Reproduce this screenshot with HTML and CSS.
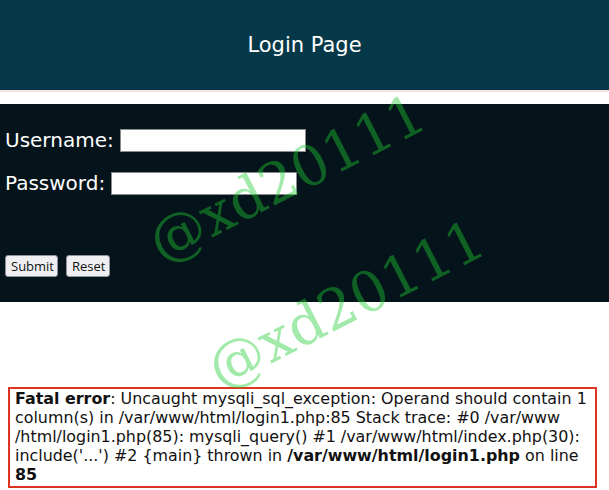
FILE: index.html
```html
<!DOCTYPE html>
<html lang="en">
<head>
<meta charset="utf-8">
<title>Login Page</title>
<link rel="stylesheet" href="styles.css">
</head>
<body>
<header class="top">
  <h1 class="title">Login Page</h1>
</header>
<div class="rule"></div>
<section class="login">
  <form class="form">
    <div class="row">
      <label class="label" for="u">Username:</label>
      <input class="field field-user" id="u" type="text">
    </div>
    <div class="row">
      <label class="label" for="p">Password:</label>
      <input class="field field-pass" id="p" type="password">
    </div>
    <div class="buttons">
      <button class="btn btn-submit" type="button">Submit</button>
      <button class="btn btn-reset" type="button">Reset</button>
    </div>
  </form>
</section>
<div class="error"><b>Fatal error</b>: Uncaught mysqli_sql_exception: Operand should contain 1 column(s) in /var/www/html/login1.php:85 Stack trace: #0 /var/www<wbr>/html/login1.php(85): mysqli_query() #1 /var/www/html/index.php(30): include('...') #2 {main} thrown in <b>/var/www/html/login1.php</b> on line <b>85</b></div>
<div class="mark mark-one">@xd20111</div>
<div class="mark mark-two">@xd20111</div>
</body>
</html>
```
FILE: styles.css
```css
html, body {
  margin: 0;
  padding: 0;
}
body {
  background: #ffffff;
  font-family: "DejaVu Sans", sans-serif;
  position: relative;
  height: 490px;
  overflow: hidden;
}
.top {
  height: 90px;
  background: #05394a;
  display: flex;
  align-items: center;
  justify-content: center;
}
.title {
  margin: 0;
  font-weight: normal;
  font-size: 21px;
  color: #ffffff;
}
.rule {
  height: 2px;
  background: #fbe3e3;
  margin-bottom: 12px;
}
.login {
  background: #05131a;
  height: 198px;
  box-sizing: border-box;
  padding: 25px 5px 0;
}
.form {
  display: flex;
  flex-direction: column;
  gap: 20px;
}
.row {
  display: flex;
  align-items: center;
  gap: 6px;
  height: 23px;
}
.label {
  font-size: 20px;
  line-height: 23px;
  color: #ffffff;
}
.field {
  box-sizing: border-box;
  width: 186px;
  height: 23px;
  margin: 0;
  border: 1px solid #8a8a8a;
  background: #ffffff;
  padding: 0 3px;
}
.buttons {
  display: flex;
  gap: 8px;
  margin-top: 40px;
}
.btn {
  box-sizing: border-box;
  height: 22px;
  margin: 0;
  padding: 0 5px;
  font-family: "Open Sans", "DejaVu Sans", sans-serif;
  font-size: 13px;
  color: #111;
  background: #efeff2;
  border: 1px solid #8f8f9d;
  border-radius: 3px;
}
.btn-submit { width: 53px; }
.btn-reset { width: 44px; }
.error {
  margin: 85px 12px 0 8px;
  border: 2px solid #dc3522;
  padding: 0 2px 2px 5px;
  font-size: 15.9px;
  line-height: 19px;
  color: #111;
}
.mark {
  position: absolute;
  font-family: "DejaVu Serif", serif;
  font-size: 56px;
  line-height: 1;
  color: rgba(30, 205, 50, 0.42);
  white-space: nowrap;
  pointer-events: none;
  transform: translate(-50%, -50%) rotate(-27deg);
}
.mark-one {
  left: 287px;
  top: 178px;
}
.mark-two {
  left: 346px;
  top: 304px;
}
```
